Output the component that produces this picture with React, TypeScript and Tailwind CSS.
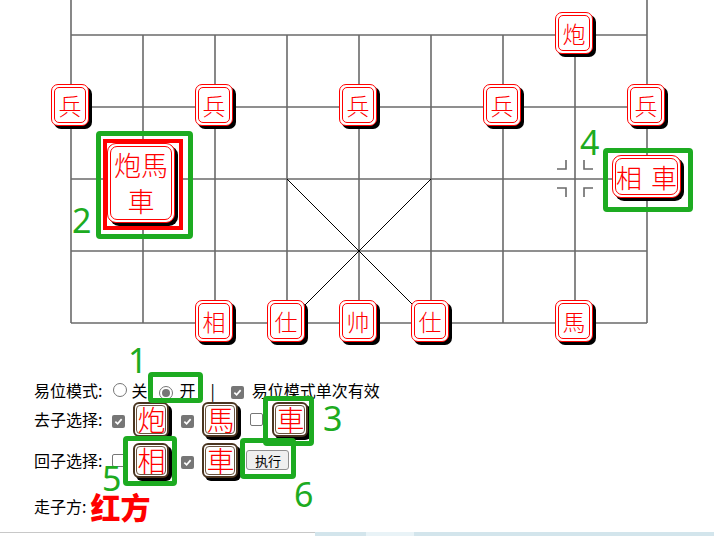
import React from 'react';

const GREEN = 'border-[#1dab21]';

type P = { x: number; y: number; ch: string };

const boardPieces: P[] = [
  { x: 575, y: 35, ch: '炮' },
  { x: 71, y: 107, ch: '兵' },
  { x: 215, y: 107, ch: '兵' },
  { x: 359, y: 107, ch: '兵' },
  { x: 503, y: 107, ch: '兵' },
  { x: 647, y: 107, ch: '兵' },
  { x: 215, y: 323, ch: '相' },
  { x: 287, y: 323, ch: '仕' },
  { x: 359, y: 323, ch: '帅' },
  { x: 431, y: 323, ch: '仕' },
  { x: 575, y: 323, ch: '馬' },
];

const cols = [71, 143, 215, 287, 359, 431, 503, 575, 647];
const rows = [35, 107, 179, 251, 323];

function BoardPiece({ x, y, ch }: P) {
  return (
    <div
      className="absolute w-[38px] h-[42px] rounded-[7px] border border-[#ff0000] bg-white shadow-[3px_3px_0_#000]"
      style={{ left: x - 20, top: y - 23 }}
    >
      <div className="absolute inset-[2px] rounded-[5px] border border-[#ff0000] flex items-center justify-center text-[23px] leading-none text-[#ff0000] font-light">
        {ch}
      </div>
    </div>
  );
}

function CtrlPiece({ ch }: { ch: string }) {
  return (
    <div className="relative w-[36px] h-[35px] shrink-0 rounded-[6px] border-2 border-[#4a3520] bg-white shadow-[3px_3px_0_#000]">
      <div className="absolute inset-[1px] rounded-[4px] border border-[#6b5540] flex items-center justify-center text-[28px] leading-none text-[#ff0000] font-light">
        {ch}
      </div>
    </div>
  );
}

function Check({ on }: { on: boolean }) {
  if (!on) return <span className="inline-block w-[13px] h-[13px] shrink-0 rounded-[2px] border border-[#767676] bg-white" />;
  return (
    <span className="inline-flex w-[13px] h-[13px] shrink-0 items-center justify-center rounded-[2px] bg-[#767676]">
      <svg width="9" height="9" viewBox="0 0 10 10">
        <path d="M1.5 5.2 L4 7.6 L8.5 2.4" fill="none" stroke="#fff" strokeWidth="1.9" />
      </svg>
    </span>
  );
}

function Radio({ on }: { on: boolean }) {
  return (
    <span className="inline-flex w-[14px] h-[14px] shrink-0 items-center justify-center rounded-full border border-[#767676] bg-white">
      {on && <span className="w-[8px] h-[8px] rounded-full bg-[#767676]" />}
    </span>
  );
}

// green annotation digits, tight line box around the glyph
function Num({ n, className }: { n: string; className: string }) {
  return (
    <span className={`absolute text-[34px] leading-[24px] text-[#1dab21] font-['Noto_Sans',sans-serif] ${className}`}>{n}</span>
  );
}

export default function App() {
  return (
    <div className="w-[714px] h-[536px] overflow-hidden bg-white text-black font-['Noto_Sans_CJK_SC',sans-serif]">
      {/* board */}
      <div className="relative h-[380px]">
        <svg className="absolute inset-0" width="714" height="380">
          {rows.map((y) => (
            <line key={y} x1={71} y1={y} x2={647} y2={y} stroke="#6a6a6a" strokeWidth="1.6" />
          ))}
          {cols.map((x, i) => (
            <line key={x} x1={x} y1={i === 0 || i === 8 ? 0 : 35} x2={x} y2={323} stroke="#6a6a6a" strokeWidth="1.6" />
          ))}
          <line x1={287} y1={179} x2={431} y2={323} stroke="#000" strokeWidth="1" />
          <line x1={431} y1={179} x2={287} y2={323} stroke="#000" strokeWidth="1" />
          <g stroke="#6a6a6a" strokeWidth="1.6" fill="none">
            <path d="M557 169 H566 V160" />
            <path d="M593 169 H584 V160" />
            <path d="M557 188 H566 V197" />
            <path d="M593 188 H584 V197" />
          </g>
        </svg>

        {boardPieces.map((p, i) => (
          <BoardPiece key={i} {...p} />
        ))}

        {/* stacked piece */}
        <div className="absolute left-[103px] top-[139px] w-[80px] h-[91px] border-4 border-[#ff0000] bg-white">
          <div className="relative w-[68px] h-[80px] rounded-[9px] border border-[#ff0000] bg-white shadow-[3px_3px_0_#000]">
            <div className="absolute inset-[2px] rounded-[7px] border border-[#ff0000] flex flex-col items-center justify-center text-[27px] leading-[36px] text-[#ff0000] font-light">
              <span>炮馬</span>
              <span>車</span>
            </div>
          </div>
        </div>

        <div className="absolute left-[612px] top-[155px] w-[69px] h-[43px] rounded-[9px] border border-[#ff0000] bg-white shadow-[3px_3px_0_#000]">
          <div className="absolute inset-[2px] rounded-[7px] border border-[#ff0000] flex items-center justify-center gap-[9px] text-[26px] leading-none text-[#ff0000] font-light">
            <span>相</span>
            <span>車</span>
          </div>
        </div>

        <div className={`absolute left-[96px] top-[131px] w-[97px] h-[108px] border-[5px] ${GREEN} rounded-[4px]`} />
        <div className={`absolute left-[603px] top-[148px] w-[90px] h-[64px] border-[5px] ${GREEN} rounded-[4px]`} />
        <Num n="2" className="left-[72px] top-[208px]" />
        <Num n="4" className="left-[580px] top-[130px]" />
      </div>

      {/* controls */}
      <div className="relative pl-[34px] text-[16px]">
        <div className="flex h-[20px] items-center">
          <span>易位模式:</span>
          <span className="ml-[11px]"><Radio on={false} /></span>
          <span className="ml-[4px]">关</span>
          <span className="ml-[12px]"><Radio on /></span>
          <span className="ml-[6px]">开</span>
          <span className="ml-[15px]">|</span>
          <span className="ml-[16px]"><Check on /></span>
          <span className="ml-[8px]">易位模式单次有效</span>
        </div>
        <div className="flex h-[38px] items-center">
          <span>去子选择:</span>
          <span className="ml-[10px]"><Check on /></span>
          <span className="ml-[8px]"><CtrlPiece ch="炮" /></span>
          <span className="ml-[12px]"><Check on /></span>
          <span className="ml-[8px]"><CtrlPiece ch="馬" /></span>
          <span className="ml-[12px]"><Check on={false} /></span>
          <span className="ml-[9px]"><CtrlPiece ch="車" /></span>
        </div>
        <div className="mt-[2px] flex h-[40px] items-center">
          <span>回子选择:</span>
          <span className="ml-[10px]"><Check on={false} /></span>
          <span className="ml-[8px]"><CtrlPiece ch="相" /></span>
          <span className="ml-[12px]"><Check on /></span>
          <span className="ml-[8px]"><CtrlPiece ch="車" /></span>
          <button className="ml-[8px] w-[43px] h-[20px] rounded-[3px] border border-[#8f8f8f] bg-[#efefef] text-[13px] leading-none">
            执行
          </button>
        </div>
        <div className="mt-[10px] flex h-[32px] items-center">
          <span>走子方:</span>
          <span className="ml-[4px] text-[30px] font-black leading-none text-[#ff0000]">红方</span>
        </div>

        <div className={`absolute left-[148px] top-[-8px] w-[55px] h-[31px] border-[5px] ${GREEN} rounded-[4px]`} />
        <div className={`absolute left-[263px] top-[16px] w-[51px] h-[50px] border-[5px] ${GREEN} rounded-[4px]`} />
        <div className={`absolute left-[123px] top-[56px] w-[54px] h-[50px] border-[5px] ${GREEN} rounded-[4px]`} />
        <div className={`absolute left-[240px] top-[58px] w-[56px] h-[41px] border-[5px] ${GREEN} rounded-[4px]`} />
        <Num n="1" className="left-[128px] top-[-32px]" />
        <Num n="3" className="left-[323px] top-[26px]" />
        <Num n="5" className="left-[102px] top-[86px]" />
        <Num n="6" className="left-[294px] top-[102px]" />
      </div>

      {/* bottom strip */}
      <div className="mt-[10px] flex h-[4px]">
        <div className="w-[315px] border-t border-[#c8c8c8] bg-white" />
        <div className="w-[51px] bg-[#d3e5ec]" />
        <div className="w-[48px] bg-[#e9f3f7]" />
        <div className="flex-1 bg-[#d3e5ec]" />
      </div>
    </div>
  );
}
